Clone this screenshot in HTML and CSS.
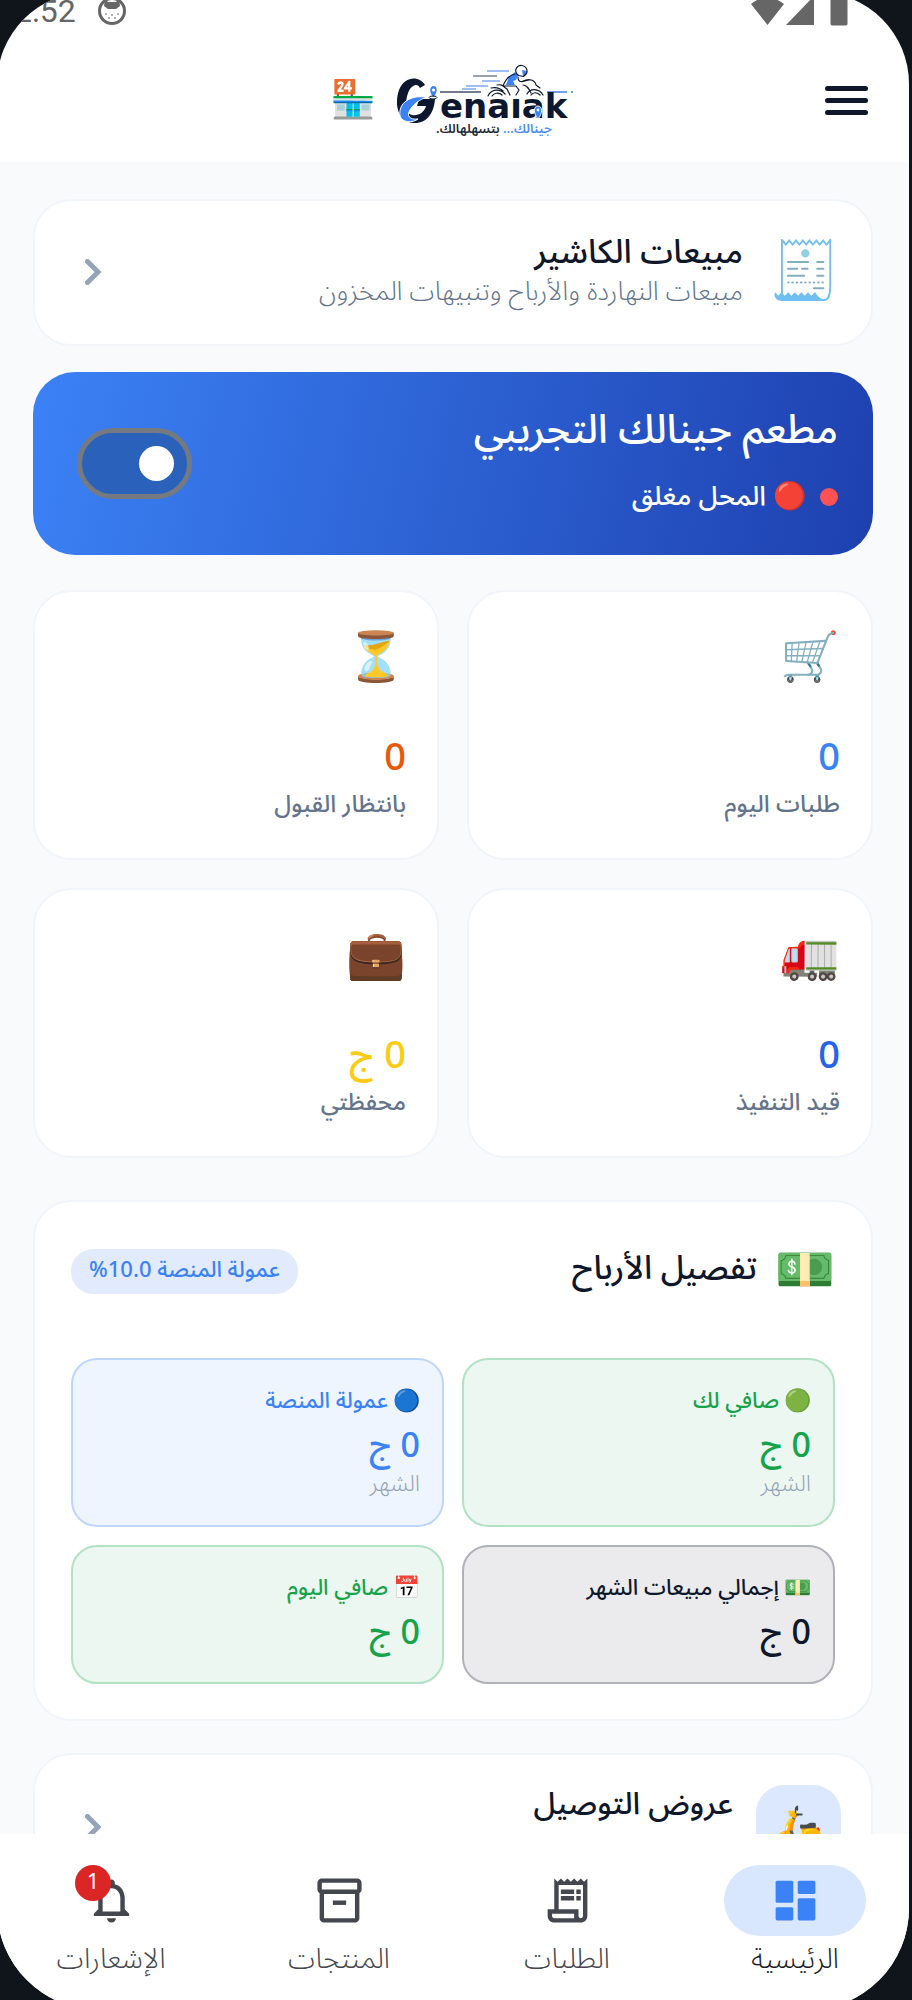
FILE: index.html
```html
<!DOCTYPE html>
<html lang="ar" dir="rtl">
<head>
<meta charset="utf-8">
<meta name="viewport" content="width=device-width, initial-scale=1">
<title>جينالك</title>
<link rel="stylesheet" href="styles.css">
</head>
<body>
<div class="screen">
  <div class="status" dir="ltr">
    <span class="status-time">2:52</span>
    <svg class="status-cat" width="28" height="30" viewBox="0 0 28 30" aria-hidden="true"><circle cx="14" cy="15" r="12.500" fill="#fff" stroke="#666" stroke-width="3"/><path d="M7 3l3 3h8l3-3 1 7-4 3h-8l-4-3z" fill="#666"/><g fill="#999"><circle cx="8" cy="18" r="1"/><circle cx="20" cy="18" r="1"/><circle cx="11" cy="22" r="1"/><circle cx="17" cy="22" r="1"/><circle cx="14" cy="19" r="1"/></g></svg>
    <svg class="status-signal" width="98" height="30" viewBox="0 0 98 30" aria-hidden="true"><g fill="#666"><path d="M0 8Q16-5 33 8L16.500 29z"/><path d="M35 29L63 0v29z"/><path d="M80 3h4V0h8v3h3q1.500 0 1.500 1.500v23q0 2-1.500 2H81q-1.500 0-1.500-2v-23Q79.500 3 80 3z"/></g></svg>
  </div>
  <header class="header">
    <button class="menu" type="button" aria-label="القائمة"><span></span><span></span><span></span></button>
    <div class="brand" dir="ltr">
      <span class="store">🏪</span>
      <svg class="logo" width="182" height="76" viewBox="0 0 182 76" role="img" aria-label="Genalak">
        <path d="M31 23C26 14 11 13 5 28C0 42 4 60 19 61C33 62 40 51 41 37H25l-2 7h9C30 51 24 54 18 53C10 51 11 35 16 27C20 22 24 22 26 26z" fill="#0d1730"/>
        <path d="M32 35C16 33 4 41 6 54C8 61 19 61 24 57C16 58 12 54 16 48C20 41 26 38 32 35z" fill="#3b82f6" stroke="#fff" stroke-width="1"/>
        <path d="M39 35C35 30 35.500 24 39.500 24S44 30 39.500 35z" fill="#3b82f6"/><circle cx="39.500" cy="28" r="1.600" fill="#fff"/>
        <ellipse cx="39" cy="35.500" rx="4" ry="1.500" fill="none" stroke="#0d1730"/>
        <path d="M46 30h41" stroke="#445068" stroke-width="1.500"/><path d="M153 30h20M177 30h2" stroke="#6ea2f8" stroke-width="2"/>
        <g stroke="#7da9f5" stroke-width="1.300"><path d="M93 9h22M72 24h22M88 19h18M68 27h14"/></g><path d="M79 14h24" stroke="#667085" stroke-width="1.300"/>
        <path d="M112 23l3-8 6-5 3 3-2 5-3 1 2 4z" fill="#3b82f6"/>
        <path d="M128 8l5 1-1 4-3 1z" fill="#3b82f6"/>
        <g fill="none" stroke="#0d1730" stroke-width="1.200" stroke-linecap="round" stroke-linejoin="round"><path d="M123 12c-3-4 0-9 5-8.500c4 .5 6 4 4.500 8l-3 3-5-1zM121 12c-6 1-10 7-12 12h13l3 4-3 5M124 15c0 4 2 5 5 4.500l6-1.500M103 23c5-1 6 1 10 4l3 6M94 34c3-7 12-8 17-2M97 26c5-1 9 0 12 3M98 34c2-3 7-4 10-1M129 19c6-3 12-1 13 4l4 3M129 23c4 0 6 4 8 8M133 32c3-6 12-6 16 1M137 33c2-3 6-3 9 0"/></g>
        <text class="logo-word" x="46" y="56">enaıak</text>
        <path d="M144 57C139 51 139.500 44 144 44S149 51 144 57z" fill="#3b82f6" stroke="#fff"/><circle cx="144" cy="48" r="1.400" fill="#fff"/>
        <text class="logo-tag" x="100" y="71" text-anchor="middle" direction="rtl"><tspan fill="#4f8df6">جينالك…</tspan> بتسهلهالك.</text>
      </svg>
    </div>
  </header>

  <main class="content">
    <a class="card link-card" href="#cashier">
      <span class="receipt">🧾</span>
      <span class="link-text"><strong class="link-title">مبيعات الكاشير</strong><span class="link-sub">مبيعات النهاردة والأرباح وتنبيهات المخزون</span></span>
      <svg class="chevron" width="16" height="26" viewBox="0 0 16 26" aria-hidden="true"><path d="M2.500 2.500L13 13L2.500 23.500"/></svg>
    </a>

    <section class="shop">
      <div class="shop-info">
        <h1 class="shop-name">مطعم جينالك التجريبي</h1>
        <label class="shop-state" for="open"><span class="dot"></span><span class="red">🔴</span>المحل مغلق</label>
      </div>
      <input class="toggle" id="open" type="checkbox" role="switch">
    </section>

    <section class="stats">
      <article class="card stat"><span class="stat-icon">🛒</span><strong class="stat-num sky">0</strong><span class="stat-label">طلبات اليوم</span></article>
      <article class="card stat"><span class="stat-icon">⏳</span><strong class="stat-num orange">0</strong><span class="stat-label">بانتظار القبول</span></article>
      <article class="card stat"><span class="stat-icon">🚛</span><strong class="stat-num royal">0</strong><span class="stat-label">قيد التنفيذ</span></article>
      <article class="card stat"><span class="stat-icon">💼</span><strong class="stat-num yellow">0 ج</strong><span class="stat-label">محفظتي</span></article>
    </section>

    <section class="card profit">
      <div class="profit-head">
        <span class="cash">💵</span>
        <h2 class="profit-title">تفصيل الأرباح</h2>
        <span class="pill">عمولة المنصة 10.0%</span>
      </div>
      <div class="profit-grid">
        <div class="box green"><span class="box-label"><i>🟢</i>صافي لك</span><strong class="box-num">0 ج</strong><span class="box-note">الشهر</span></div>
        <div class="box blue"><span class="box-label"><i>🔵</i>عمولة المنصة</span><strong class="box-num">0 ج</strong><span class="box-note">الشهر</span></div>
        <div class="box gray"><span class="box-label"><i>💵</i>إجمالي مبيعات الشهر</span><strong class="box-num">0 ج</strong></div>
        <div class="box green"><span class="box-label"><i>📅</i>صافي اليوم</span><strong class="box-num">0 ج</strong></div>
      </div>
    </section>

    <a class="card offers" href="#offers">
      <span class="scooter">🛵</span>
      <strong class="offers-title">عروض التوصيل</strong>
      <svg class="chevron" width="16" height="26" viewBox="0 0 16 26" aria-hidden="true"><path d="M2.500 2.500L13 13L2.500 23.500"/></svg>
    </a>
  </main>

  <nav class="nav">
    <a class="nav-item active" href="#home"><span class="nav-icon"><svg viewBox="0 0 24 24" aria-hidden="true"><rect x="3" y="3" width="8" height="10" rx=".7"/><rect x="3" y="15" width="8" height="6" rx=".7"/><rect x="13" y="3" width="8" height="6" rx=".7"/><rect x="13" y="11" width="8" height="10" rx=".7"/></svg></span>الرئيسية</a>
    <a class="nav-item" href="#orders"><span class="nav-icon"><svg viewBox="0 0 24 24" aria-hidden="true"><path d="M19.500 3.500L18 2l-1.500 1.500L15 2l-1.500 1.500L12 2l-1.500 1.500L9 2 7.500 3.500 6 2v14H3v3c0 1.660 1.340 3 3 3h12c1.660 0 3-1.340 3-3V2l-1.500 1.500zM15 20H6c-.55 0-1-.45-1-1v-1h10v2zm4-1c0 .55-.45 1-1 1s-1-.45-1-1v-3H8V5h11v14z"/><path d="M9 7h6v2H9zM16 7h2v2h-2zM9 10h6v2H9zM16 10h2v2h-2z"/></svg></span>الطلبات</a>
    <a class="nav-item" href="#products"><span class="nav-icon"><svg viewBox="0 0 24 24" aria-hidden="true"><path d="M20 2H4c-1 0-2 .9-2 2v3.010c0 .72.43 1.340 1 1.690V20c0 1.100 1.100 2 2 2h14c.9 0 2-.9 2-2V8.700c.57-.35 1-.97 1-1.690V4c0-1.100-1-2-2-2zm-1 18H5V9h14v11zm1-13H4V4h16v3z"/><path d="M9 12h6v2H9z"/></svg></span>المنتجات</a>
    <a class="nav-item" href="#alerts"><span class="nav-icon"><svg viewBox="0 0 24 24" aria-hidden="true"><path d="M12 22c1.100 0 2-.9 2-2h-4c0 1.100.9 2 2 2zm6-6v-5c0-3.070-1.630-5.640-4.500-6.320V4c0-.83-.67-1.500-1.500-1.500s-1.500.67-1.500 1.500v.68C7.640 5.360 6 7.920 6 11v5l-2 2v1h16v-1l-2-2zm-2 1H8v-6c0-2.480 1.510-4.500 4-4.500s4 2.020 4 4.500v6z"/></svg><b class="badge">1</b></span>الإشعارات</a>
  </nav>
</div>
</body>
</html>
```
FILE: styles.css
```css
* { box-sizing: border-box; }
body {
  margin: 0;
  height: 100vh;
  overflow: hidden;
  background: #10141b;
  color: #0f172a;
  font-family: "Noto Sans Arabic", "Noto Sans", sans-serif;
}
a { color: inherit; text-decoration: none; }
h1, h2 { margin: 0; }
i { font-style: normal; }

.screen {
  display: flex;
  flex-direction: column;
  height: calc(100vh + 18px);
  margin: -8px 3px -10px -3px;
  overflow: hidden;
  border-radius: 92px 92px 102px 102px;
  background: #fff;
}

.status {
  display: flex;
  align-items: center;
  height: 44px;
  padding: 0 60px 6px 17px;
  color: #666;
  font: 400 32px/34px Roboto, sans-serif;
}
.status-cat { margin-left: 22px; }
.status-signal { margin-left: auto; }

.header {
  display: grid;
  grid-template-columns: 1fr auto 1fr;
  align-items: center;
  height: 126px;
  padding: 2px 41px 0;
}
.menu {
  display: flex;
  flex-direction: column;
  gap: 7px;
  width: 43px;
  padding: 0;
  border: 0;
  background: none;
}
.menu span { height: 5px; border-radius: 3px; background: #0f172a; }
.brand { display: flex; align-items: center; gap: 18px; }
.store { font-size: 37px; line-height: 44px; }
.logo { overflow: visible; }
.logo-word { fill: #0d1730; font: 700 34px "DejaVu Sans", sans-serif; }
.logo-tag { fill: #1e293b; font: 600 13px "Noto Sans Arabic", sans-serif; }

.content {
  flex: 1;
  min-height: 0;
  overflow: hidden;
  padding: 37px 36px 0;
  background: #f8fafc;
}
.card {
  border: 2px solid #f1f5f9;
  border-radius: 38px;
  background: #fff;
}
.chevron {
  margin-right: auto;
  fill: none;
  stroke: #94a3b8;
  stroke-width: 5;
  stroke-linecap: round;
}

.link-card {
  display: flex;
  align-items: center;
  gap: 26px;
  height: 147px;
  padding: 0 31px 2px 50px;
}
.receipt { font-size: 57px; line-height: 64px; }
.link-text { display: flex; flex-direction: column; }
.link-title { font-size: 33px; font-weight: 500; line-height: 40px; }
.link-sub { color: #64748b; font-size: 26px; font-weight: 300; line-height: 38px; }

.shop {
  display: flex;
  align-items: center;
  justify-content: space-between;
  height: 183px;
  margin-top: 26px;
  padding: 0 35px 0 44px;
  border-radius: 42px;
  background: linear-gradient(102deg, #3b82f6, #1e40af);
  color: #fff;
}
.shop-info { padding-bottom: 10px; }
.shop-name { font-size: 40px; font-weight: 500; line-height: 56px; }
.shop-state { display: flex; align-items: center; margin-top: 20px; font-size: 27px; font-weight: 500; line-height: 36px; }
.dot { width: 18px; height: 18px; margin-left: 13px; border-radius: 50%; background: #ff5252; }
.red { margin-left: 7px; }
.toggle {
  appearance: none;
  display: flex;
  align-items: center;
  width: 115px;
  height: 71px;
  margin: 0;
  padding: 0 13px;
  border: 5px solid #757a80;
  border-radius: 36px;
  background: #2a62bb;
}
.toggle::before { content: ""; width: 35px; height: 35px; border-radius: 50%; background: #fff; }

.stats {
  display: grid;
  grid-template-columns: 1fr 1fr;
  gap: 28px;
  margin-top: 35px;
}
.stat { display: flex; flex-direction: column; align-items: flex-start; padding: 39px 31px 37px; }
.stat-icon { font-size: 48px; line-height: 54px; }
.stat-num { margin-top: 50px; font-size: 38px; font-weight: 500; line-height: 46px; }
.stat-label { margin-top: 8px; color: #64748b; font-size: 24px; font-weight: 500; line-height: 32px; }
.sky { color: #3b82f6; }
.orange { color: #ea580c; }
.royal { color: #2563eb; }
.yellow { color: #facc15; }

.profit { margin-top: 42px; padding: 41px 36px 35px; }
.profit-head { display: flex; align-items: center; height: 56px; margin-bottom: 59px; }
.cash { font-size: 48px; line-height: 56px; }
.profit-title { margin-right: 18px; padding-bottom: 4px; font-size: 33px; font-weight: 500; line-height: 44px; }
.pill { margin-right: auto; padding: 0 18px 2px; border-radius: 22px; background: #e2ebfe; color: #3b82f6; font-size: 22px; font-weight: 500; line-height: 43px; }
.profit-grid { display: grid; grid-template-columns: 1fr 1fr; gap: 18px; }
.box { display: flex; flex-direction: column; align-items: flex-start; padding: 27px 22px 29px; border: 2px solid; border-radius: 26px; }
.box-label { display: flex; align-items: center; gap: 5px; font-size: 22px; font-weight: 500; line-height: 28px; }
.box-num { margin-top: 11px; font-size: 34px; font-weight: 500; line-height: 40px; }
.box-note { margin-top: 6px; color: #94a3b8; font-size: 23px; font-weight: 300; line-height: 24px; }
.green { border-color: #b2e1c4; background: #ecf7f1; color: #16a34a; }
.blue { border-color: #bed5fc; background: #eef5fe; color: #3b82f6; }
.gray { border-color: #b0b2b9; background: #ebebed; color: #0f172a; }

.offers { display: flex; align-items: center; height: 148px; margin-top: 32px; padding: 0 30px 0 50px; }
.scooter { width: 85px; height: 85px; border-radius: 28px; background: #dce8fd; font-size: 40px; line-height: 85px; text-align: center; }
.offers-title { align-self: flex-start; margin: 27px 23px 0 0; font-size: 31px; font-weight: 500; line-height: 44px; }

.nav { display: flex; height: 176px; padding-top: 31px; background: #fff; }
.nav-item { flex: 1; display: flex; flex-direction: column; align-items: center; gap: 6px; color: #44474e; font-size: 28px; font-weight: 300; line-height: 36px; }
.nav-icon { position: relative; display: grid; place-items: center; width: 142px; height: 71px; border-radius: 36px; }
.nav-icon svg { width: 53px; height: 53px; fill: currentColor; }
.active { color: #1b1b1f; }
.active .nav-icon { background: #d8e6fe; color: #3b82f6; }
.badge { position: absolute; top: 0; left: 35px; width: 36px; height: 36px; border-radius: 50%; background: #dc2626; color: #fff; font: 400 22px/30px "Noto Sans", sans-serif; text-align: center; }
```
